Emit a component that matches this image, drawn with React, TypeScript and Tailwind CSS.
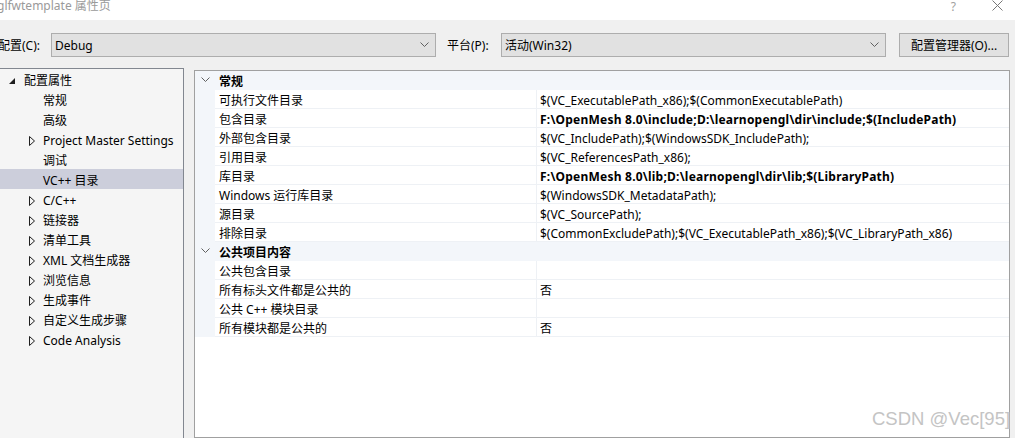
const font = { fontFamily: '"Noto Sans", "Noto Sans CJK SC", sans-serif' };

const treeItems: { label: string; arrow: boolean; selected?: boolean }[] = [
  { label: "常规", arrow: false },
  { label: "高级", arrow: false },
  { label: "Project Master Settings", arrow: true },
  { label: "调试", arrow: false },
  { label: "VC++ 目录", arrow: false, selected: true },
  { label: "C/C++", arrow: true },
  { label: "链接器", arrow: true },
  { label: "清单工具", arrow: true },
  { label: "XML 文档生成器", arrow: true },
  { label: "浏览信息", arrow: true },
  { label: "生成事件", arrow: true },
  { label: "自定义生成步骤", arrow: true },
  { label: "Code Analysis", arrow: true },
];

type Row =
  | { kind: "cat"; label: string }
  | { kind: "prop"; name: string; value: string; bold?: boolean };

const rows: Row[] = [
  { kind: "cat", label: "常规" },
  { kind: "prop", name: "可执行文件目录", value: "$(VC_ExecutablePath_x86);$(CommonExecutablePath)" },
  { kind: "prop", name: "包含目录", value: "F:\\OpenMesh 8.0\\include;D:\\learnopengl\\dir\\include;$(IncludePath)", bold: true },
  { kind: "prop", name: "外部包含目录", value: "$(VC_IncludePath);$(WindowsSDK_IncludePath);" },
  { kind: "prop", name: "引用目录", value: "$(VC_ReferencesPath_x86);" },
  { kind: "prop", name: "库目录", value: "F:\\OpenMesh 8.0\\lib;D:\\learnopengl\\dir\\lib;$(LibraryPath)", bold: true },
  { kind: "prop", name: "Windows 运行库目录", value: "$(WindowsSDK_MetadataPath);" },
  { kind: "prop", name: "源目录", value: "$(VC_SourcePath);" },
  { kind: "prop", name: "排除目录", value: "$(CommonExcludePath);$(VC_ExecutablePath_x86);$(VC_LibraryPath_x86)" },
  { kind: "cat", label: "公共项目内容" },
  { kind: "prop", name: "公共包含目录", value: "" },
  { kind: "prop", name: "所有标头文件都是公共的", value: "否" },
  { kind: "prop", name: "公共 C++ 模块目录", value: "" },
  { kind: "prop", name: "所有模块都是公共的", value: "否" },
];

const Chevron = ({ className = "" }: { className?: string }) => (
  <svg width="9" height="6" viewBox="0 0 9 6" className={className}>
    <polyline points="0.5,0.5 4.5,4.5 8.5,0.5" fill="none" stroke="#606060" strokeWidth="1" />
  </svg>
);

const Combo = ({ value }: { value: string }) => (
  <div className="w-[385px] h-[24px] bg-[#e1e1e1] border border-[#adadad] flex items-center justify-between pl-[3px] pr-[6px] text-[12px] text-black">
    <span className="pt-[2px]">{value}</span>
    <Chevron />
  </div>
);

const App = () => {
  return (
    <div className="w-[1015px] h-[438px] overflow-hidden relative bg-[#f0f0f0] text-black" style={font}>
      {/* title bar */}
      <div className="h-[20px] bg-white flex items-start text-[12px] leading-[12px] text-[#9a9a9a]">
        <span className="-ml-[3px]">glfwtemplate 属性页</span>
        <span className="ml-auto mt-[1px] text-[#a0a0a0]">?</span>
        <svg width="11" height="11" viewBox="0 0 11 11" className="ml-[36px] mr-[12px]">
          <path d="M0.5 0.5 L10.5 10.5 M10.5 0.5 L0.5 10.5" stroke="#777" strokeWidth="1" />
        </svg>
      </div>

      {/* config row */}
      <div className="h-[48px] flex items-center pt-[1px] text-[12px]">
        <span className="w-[53px] -ml-[2px] pt-[2px]">配置(C):</span>
        <Combo value="Debug" />
        <span className="ml-[11px] w-[54px] pt-[2px]">平台(P):</span>
        <Combo value="活动(Win32)" />
        <div className="ml-[13px] w-[110px] h-[24px] pt-[2px] bg-[#e1e1e1] border border-[#adadad] flex items-center justify-center">
          配置管理器(O)...
        </div>
      </div>

      {/* main area */}
      <div className="flex h-[370px]">
        <div className="w-[184px] bg-[#f5f5f5] border-t border-r border-[#828790] text-[12px]">
          <div className="h-[20px] pt-[3px] flex items-center">
            <svg width="6" height="6" viewBox="0 0 6 6" className="ml-[9px] mr-[9px]">
              <polygon points="6,0 6,6 0,6" fill="#1e1e1e" />
            </svg>
            <span>配置属性</span>
          </div>
          {treeItems.map((item) => (
            <div
              key={item.label}
              className={
                "h-[20px] pt-[3px] flex items-center " + (item.selected ? "bg-[#cccedb]" : "")
              }
            >
              <div className="w-[43px] flex justify-start pl-[29px]">
                {item.arrow && (
                  <svg width="6" height="10" viewBox="0 0 6 10">
                    <polygon points="0.5,0.5 5.5,5 0.5,9.5" fill="none" stroke="#1e1e1e" strokeWidth="1" />
                  </svg>
                )}
              </div>
              <span>{item.label}</span>
            </div>
          ))}
        </div>

        <div className="ml-[10px] mr-[5px] mt-[2px] flex-1 bg-white border border-[#a0a0a0] text-[12px]">
          {rows.map((row, i) =>
            row.kind === "cat" ? (
              <div key={i} className="h-[19px] flex bg-[#f3f6fa] border-b border-[#f3f6fa]">
                <div className="w-[20px] flex items-center justify-center">
                  <Chevron />
                </div>
                <span className="ml-[4px] pt-[4px] flex items-center font-bold">{row.label}</span>
              </div>
            ) : (
              <div key={i} className="h-[19px] flex">
                <div className="w-[20px] bg-[#f3f6fa]" />
                <div className="w-[322px] pl-[4px] pt-[4px] flex items-center border-b border-r border-[#eef1f5]">
                  {row.name}
                </div>
                <div
                  className={
                    "flex-1 pl-[3px] pt-[4px] flex items-center border-b border-[#eef1f5] whitespace-nowrap " +
                    (row.bold ? "font-bold tracking-[0.22px]" : "")
                  }
                >
                  {row.value}
                </div>
              </div>
            )
          )}
        </div>
      </div>

      <div
        className="absolute left-[872px] top-[410px] text-[18.5px] leading-none text-[#c4c4c4]"
        style={{ fontFamily: '"Liberation Sans", Arial, sans-serif', textShadow: "0 0 1px #ffffff" }}
      >
        CSDN @Vec[95]
      </div>
    </div>
  );
};

export default App;
